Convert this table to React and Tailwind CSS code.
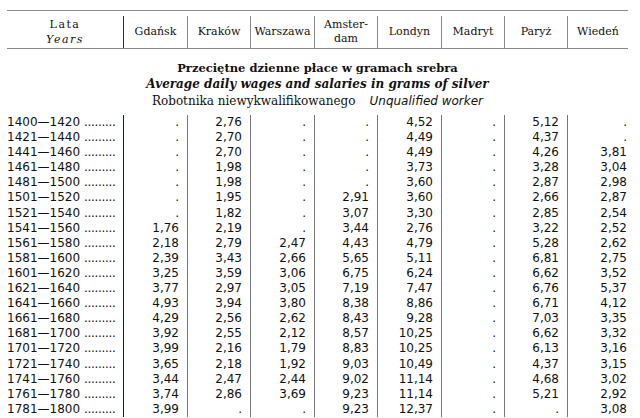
import React from "react";

const years = [
  "1400—1420","1421—1440","1441—1460","1461—1480","1481—1500","1501—1520","1521—1540","1541—1560","1561—1580","1581—1600",
  "1601—1620","1621—1640","1641—1660","1661—1680","1681—1700","1701—1720","1721—1740","1741—1760","1761—1780","1781—1800",
];

const cols = [
  [".",".",".",".",".",".",".","1,76","2,18","2,39","3,25","3,77","4,93","4,29","3,92","3,99","3,65","3,44","3,74","3,99"],
  ["2,76","2,70","2,70","1,98","1,98","1,95","1,82","2,19","2,79","3,43","3,59","2,97","3,94","2,56","2,55","2,16","2,18","2,47","2,86","."],
  [".",".",".",".",".",".",".",".","2,47","2,66","3,06","3,05","3,80","2,62","2,12","1,79","1,92","2,44","3,69","."],
  [".",".",".",".",".","2,91","3,07","3,44","4,43","5,65","6,75","7,19","8,38","8,43","8,57","8,83","9,03","9,02","9,23","9,23"],
  ["4,52","4,49","4,49","3,73","3,60","3,60","3,30","2,76","4,79","5,11","6,24","7,47","8,86","9,28","10,25","10,25","10,49","11,14","11,14","12,37"],
  [".",".",".",".",".",".",".",".",".",".",".",".",".",".",".",".",".",".",".","."],
  ["5,12","4,37","4,26","3,28","2,87","2,66","2,85","3,22","5,28","6,81","6,62","6,76","6,71","7,03","6,62","6,13","4,37","4,68","5,21","."],
  [".",".","3,81","3,04","2,98","2,87","2,54","2,52","2,62","2,75","3,52","5,37","4,12","3,35","3,32","3,16","3,15","3,02","2,92","3,08"],
];

const serif = "font-['DejaVu_Serif',serif]";
const sans = "font-['DejaVu_Sans',Verdana,sans-serif]";

export default function App() {
  const grid = "grid grid-cols-[117px_64px_63px_64px_63px_64px_63px_63px_60px]";
  return (
    <div className="w-[640px] h-[418px] overflow-hidden bg-white pl-[7px] pt-[10px] text-[#111]">
      <div className="w-[621px]">
        <div className={`${grid} h-[39px] border-y border-[#8a8a8a] ${serif} text-[11px] pt-[5px]`}>
          <div className="flex flex-col items-center justify-center border-r border-[#333] leading-[15px] tracking-[1.5px]">
            <span>Lata</span>
            <span className="italic">Years</span>
          </div>
          <div className="flex items-center justify-center border-r border-[#8a8a8a]">Gdańsk</div>
          <div className="flex items-center justify-center border-r border-[#8a8a8a]">Kraków</div>
          <div className="flex items-center justify-center border-r border-[#8a8a8a]">Warszawa</div>
          <div className="flex flex-col items-center justify-center border-r border-[#8a8a8a] leading-[14px]">
            <span>Amster-</span>
            <span>dam</span>
          </div>
          <div className="flex items-center justify-center border-r border-[#8a8a8a]">Londyn</div>
          <div className="flex items-center justify-center border-r border-[#8a8a8a]">Madryt</div>
          <div className="flex items-center justify-center border-r border-[#8a8a8a]">Paryż</div>
          <div className="flex items-center justify-center">Wiedeń</div>
        </div>

        <div className="h-[66px] pt-[11px] flex flex-col items-center leading-[16.4px]">
          <div className={`${serif} font-bold text-[11.5px]`}>Przeciętne dzienne płace w gramach srebra</div>
          <div className={`${serif} font-bold italic text-[12px]`}>Average daily wages and salaries in grams of silver</div>
          <div className="flex items-baseline gap-[14px] text-[12px]">
            <span className={serif}>Robotnika niewykwalifikowanego</span>
            <span className={`${sans} italic text-[12px]`}>Unqualified worker</span>
          </div>
        </div>

        <div className={`${grid} ${sans} text-[12px] leading-[15.1px]`}>
          <div className="border-r border-[#222] whitespace-nowrap">
            {years.map((y) => (
              <div key={y} className="h-[15.1px]">
                {y} <span className="tracking-[-0.3px]">.........</span>
              </div>
            ))}
          </div>
          {cols.map((c, i) => (
            <div
              key={i}
              className={
                i === cols.length - 1
                  ? "text-right pr-[1px]"
                  : "text-right pr-[8px] border-r border-[#777]"
              }
            >
              {c.map((v, j) => (
                <div key={j} className="h-[15.1px]">
                  {v}
                </div>
              ))}
            </div>
          ))}
        </div>
      </div>
    </div>
  );
}
